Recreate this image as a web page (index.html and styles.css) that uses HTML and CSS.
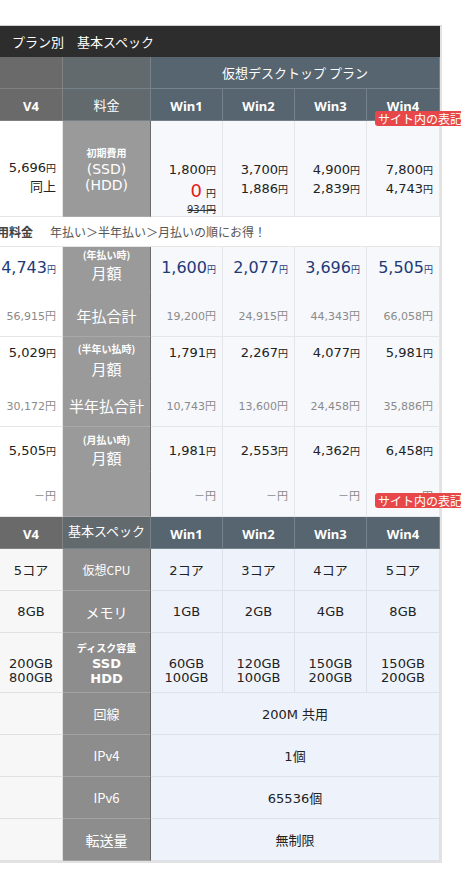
FILE: index.html
```html
<!DOCTYPE html>
<html lang="ja">
<head>
<meta charset="utf-8">
<title>プラン別 基本スペック</title>
<link rel="stylesheet" href="styles.css">
</head>
<body>
<div class="frame">
  <div class="sheet">
    <div class="title">プラン別　基本スペック</div>
    <div class="grid">
      <!-- header 1 -->
      <div class="c hd hd-v"></div>
      <div class="c hd hd-l"></div>
      <div class="c hd hd-w span4">仮想デスクトップ プラン</div>
      <!-- header 2 -->
      <div class="c hd hd-v hb">V4</div>
      <div class="c hd hd-l">料金</div>
      <div class="c hd hd-w hb">Win1</div>
      <div class="c hd hd-w hb">Win2</div>
      <div class="c hd hd-w hb">Win3</div>
      <div class="c hd hd-w hb">Win4</div>
      <!-- initial -->
      <div class="c p0 num init0"><span class="l18">5,696<small>円</small></span><span class="l18">同上</span></div>
      <div class="c lb init-l"><span class="xs">初期費用</span><span class="paren">(SSD)</span><span class="paren">(HDD)</span></div>
      <div class="c pw num init"><span class="l18">1,800<small>円</small></span><span class="zero"><em>0</em> <small>円</small></span><span class="strike">934円</span></div>
      <div class="c pw num init"><span class="l18">3,700<small>円</small></span><span class="l18">1,886<small>円</small></span></div>
      <div class="c pw num init"><span class="l18">4,900<small>円</small></span><span class="l18">2,839<small>円</small></span></div>
      <div class="c pw num init"><span class="l18">7,800<small>円</small></span><span class="l18">4,743<small>円</small></span></div>
      <!-- note -->
      <div class="c note span6"><b>月額利用料金</b><span>年払い＞半年払い＞月払いの順にお得！</span></div>
      <!-- yearly -->
      <div class="c p0 num sub y1"><span class="big">4,743<small>円</small></span></div>
      <div class="c lb sub lab-y"><span class="xs">(年払い時)</span><span class="mo">月額</span></div>
      <div class="c pw num sub y1"><span class="big">1,600<small>円</small></span></div>
      <div class="c pw num sub y1"><span class="big">2,077<small>円</small></span></div>
      <div class="c pw num sub y1"><span class="big">3,696<small>円</small></span></div>
      <div class="c pw num sub y1"><span class="big">5,505<small>円</small></span></div>
      <div class="c p0 num tot-row"><span class="tot">56,915円</span></div>
      <div class="c lb tot-row"><span class="lg">年払合計</span></div>
      <div class="c pw num tot-row"><span class="tot">19,200円</span></div>
      <div class="c pw num tot-row"><span class="tot">24,915円</span></div>
      <div class="c pw num tot-row"><span class="tot">44,343円</span></div>
      <div class="c pw num tot-row"><span class="tot">66,058円</span></div>
      <!-- half yearly -->
      <div class="c p0 num sub h1"><span class="l20">5,029<small>円</small></span></div>
      <div class="c lb sub lab-h"><span class="xs">(半年い払時)</span><span class="mo">月額</span></div>
      <div class="c pw num sub h1"><span class="l20">1,791<small>円</small></span></div>
      <div class="c pw num sub h1"><span class="l20">2,267<small>円</small></span></div>
      <div class="c pw num sub h1"><span class="l20">4,077<small>円</small></span></div>
      <div class="c pw num sub h1"><span class="l20">5,981<small>円</small></span></div>
      <div class="c p0 num tot-row"><span class="tot">30,172円</span></div>
      <div class="c lb tot-row"><span class="lg">半年払合計</span></div>
      <div class="c pw num tot-row"><span class="tot">10,743円</span></div>
      <div class="c pw num tot-row"><span class="tot">13,600円</span></div>
      <div class="c pw num tot-row"><span class="tot">24,458円</span></div>
      <div class="c pw num tot-row"><span class="tot">35,886円</span></div>
      <!-- monthly -->
      <div class="c p0 num sub m1"><span class="l20">5,505<small>円</small></span></div>
      <div class="c lb sub lab-m"><span class="xs">(月払い時)</span><span class="mo">月額</span></div>
      <div class="c pw num sub m1"><span class="l20">1,981<small>円</small></span></div>
      <div class="c pw num sub m1"><span class="l20">2,553<small>円</small></span></div>
      <div class="c pw num sub m1"><span class="l20">4,362<small>円</small></span></div>
      <div class="c pw num sub m1"><span class="l20">6,458<small>円</small></span></div>
      <div class="c p0 num tot-row"><span class="tot">－円</span></div>
      <div class="c lb tot-row"></div>
      <div class="c pw num tot-row"><span class="tot">－円</span></div>
      <div class="c pw num tot-row"><span class="tot">－円</span></div>
      <div class="c pw num tot-row"><span class="tot">－円</span></div>
      <div class="c pw num tot-row"><span class="tot">－円</span></div>
      <!-- spec header -->
      <div class="c hd hd-v hb">V4</div>
      <div class="c hd hd-l spec-h">基本スペック</div>
      <div class="c hd hd-w hb">Win1</div>
      <div class="c hd hd-w hb">Win2</div>
      <div class="c hd hd-w hb">Win3</div>
      <div class="c hd hd-w hb">Win4</div>
      <!-- cpu -->
      <div class="c s0">5コア</div>
      <div class="c sl sm">仮想CPU</div>
      <div class="c sw">2コア</div>
      <div class="c sw">3コア</div>
      <div class="c sw">4コア</div>
      <div class="c sw">5コア</div>
      <!-- memory -->
      <div class="c s0">8GB</div>
      <div class="c sl mem">メモリ</div>
      <div class="c sw">1GB</div>
      <div class="c sw">2GB</div>
      <div class="c sw">4GB</div>
      <div class="c sw">8GB</div>
      <!-- disk -->
      <div class="c s0 disk"><span>200GB</span><span>800GB</span></div>
      <div class="c sl disk-l"><span class="xs">ディスク容量</span><span class="dk">SSD</span><span class="dk">HDD</span></div>
      <div class="c sw disk"><span>60GB</span><span>100GB</span></div>
      <div class="c sw disk"><span>120GB</span><span>100GB</span></div>
      <div class="c sw disk"><span>150GB</span><span>200GB</span></div>
      <div class="c sw disk"><span>150GB</span><span>200GB</span></div>
      <!-- line -->
      <div class="c s0"></div>
      <div class="c sl">回線</div>
      <div class="c sw span4">200M 共用</div>
      <div class="c s0"></div>
      <div class="c sl">IPv4</div>
      <div class="c sw span4">1個</div>
      <div class="c s0"></div>
      <div class="c sl">IPv6</div>
      <div class="c sw span4">65536個</div>
      <div class="c s0"></div>
      <div class="c sl mem">転送量</div>
      <div class="c sw span4">無制限</div>
    </div>
  </div>
  <span class="badge b1">サイト内の表記について</span>
  <span class="badge b2">サイト内の表記について</span>
</div>
</body>
</html>
```

FILE: styles.css
```css
* { box-sizing: border-box; }
html, body { margin: 0; padding: 0; background: #fff; }
body {
  font-family: "DejaVu Sans", "Noto Sans CJK JP", sans-serif;
  font-size: 13px;
  color: #222;
}
.frame {
  position: relative;
  width: 461px;
  height: 874px;
  overflow: hidden;
  padding-top: 25px;
}
.sheet {
  width: 442px;
  border-top: 1px solid #cfcfcf;
  border-right: 2px solid #e2e2e2;
  border-bottom: 2px solid #e2e2e2;
}
.title {
  height: 31px;
  line-height: 31px;
  background: #2d2d2d;
  color: #fff;
  font-family: "Noto Sans CJK JP", sans-serif;
  font-size: 13px;
  padding-left: 12px;
}
.grid {
  display: grid;
  grid-template-columns: 63px 88px 72px 72px 72px 73px;
  grid-template-rows: 32px 32px 96px 30px 45px 45px 45px 45px 45px 45px 32px 42px 42px 60px 42px 42px 42px 42px;
}
.c {
  display: flex;
  flex-direction: column;
  align-items: center;
  justify-content: center;
  border-right: 1px solid #e3e6eb;
  border-bottom: 1px solid #e3e6eb;
  white-space: nowrap;
  min-width: 0;
}
.span4 { grid-column: span 4; }
.span6 { grid-column: span 6; }

/* headers */
.hd {
  color: #fff;
  font-family: "Noto Sans CJK JP", sans-serif;
  font-size: 13px;
  border-right-color: #76828a;
  border-bottom-color: #76828a;
}
.hd-v { background: #6a6a6a; border-right-color: #828282; border-bottom-color: #808080; }
.hd-l { background: #636a6e; }
.hd-w { background: #566570; }
.hb {
  font-family: "Noto Sans", "Noto Sans CJK JP", sans-serif;
  font-weight: bold;
  font-size: 13px;
  padding-top: 2px;
}
.spec-h { padding-bottom: 4px; }

/* price cells */
.p0 { background: #fff; border-right-color: #e6e6e6; border-bottom-color: #e6e6e6; }
.pw { background: #f6f8fc; }
.lb {
  background: #9a9a9a;
  color: #fff;
  border-right: 1px solid #6c6c6c;
  border-bottom-color: #a9a9a9;
  font-family: "Noto Sans CJK JP", sans-serif;
}
.num { align-items: flex-end; padding-right: 6px; }
small { font-size: 10px; }
.l18 { line-height: 18px; }
.l20 { line-height: 20px; font-size: 13px; }
.init { justify-content: flex-start; padding-top: 40px; }
.init0 { justify-content: flex-start; padding-top: 38px; }
.zero { line-height: 22px; }
.zero em { font-style: normal; color: #e41b1b; font-size: 18px; }
.strike { font-size: 10px; line-height: 10px; text-decoration: line-through; color: #333; }
.xs { font-size: 10px; line-height: 14px; font-weight: bold; }
.paren { font-family: "DejaVu Sans", sans-serif; font-size: 14px; line-height: 16px; }
.init-l { padding-top: 0; }
.init-l .xs { line-height: 16px; }

.note {
  display: block;
  background: #fff;
  border-bottom-color: #e6e6e6;
  border-right: none;
  font-family: "Noto Sans CJK JP", sans-serif;
  font-size: 12px;
  line-height: 29px;
  color: #555;
}
.note b { display: inline-block; margin-left: -39px; margin-right: 17px; color: #444; }

.sub { justify-content: flex-start; border-bottom-color: transparent; }
.lb.sub { border-bottom-color: #9a9a9a; }
.big { font-size: 16px; line-height: 30px; color: #1f3a78; }
.big small { font-size: 9px; }
.y1 { padding-top: 6px; }
.h1 { padding-top: 6px; }
.m1 { padding-top: 14px; }
.lab-y { padding-top: 2px; }
.lab-h { padding-top: 6px; }
.lab-m { padding-top: 7px; }
.lab-y .xs, .lab-h .xs, .lab-m .xs { line-height: 12px; }
.mo { font-size: 15px; line-height: 24px; }
.lab-h .mo { line-height: 28px; }
.tot-row { padding-top: 2px; }
.tot { font-size: 11px; color: #8a8a8a; }
.lg { font-size: 15px; }

/* spec cells */
.s0 { background: #f7f7f7; border-right-color: #e0e0e0; border-bottom-color: #e0e0e0; }
.sw { background: #eef2fb; border-bottom-color: #dde2ea; border-right-color: #dde2ea; }
.sl {
  background: #8d8d8d;
  color: #fff;
  border-right: 1px solid #636363;
  border-bottom-color: #a3a3a3;
  font-family: "Noto Sans CJK JP", sans-serif;
  font-size: 13px;
}
.sm { font-size: 12px; }
.mem { font-size: 14px; }
.disk { justify-content: flex-start; padding-top: 24px; line-height: 14px; }
.disk-l { justify-content: flex-start; padding-top: 7px; }
.disk-l .xs { line-height: 16px; }
.dk { font-size: 13px; font-weight: bold; line-height: 15px; font-family: "DejaVu Sans", sans-serif; }

.badge {
  position: absolute;
  left: 375px;
  height: 15px;
  padding: 0 3px;
  background: #e8474a;
  color: #fff;
  font-family: "Noto Sans CJK JP", sans-serif;
  font-size: 12px;
  line-height: 15px;
  border-radius: 3px;
  white-space: nowrap;
}
.b1 { top: 111px; }
.b2 { top: 493px; }
```
